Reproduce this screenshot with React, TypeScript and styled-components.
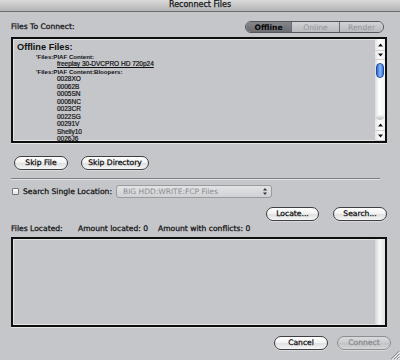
import React from 'react';
import styled, { createGlobalStyle } from 'styled-components';

const GlobalStyle = createGlobalStyle`
  html, body {
    margin: 0;
    padding: 0;
    background: #c5c6ca;
  }
  body {
    font-family: "DejaVu Sans", "Liberation Sans", Arial, sans-serif;
    color: #111;
  }
`;

const Window = styled.div`
  position: relative;
  width: 400px;
  height: 360px;
  overflow: hidden;
  background: #c5c6ca;
  display: flex;
  flex-direction: column;
`;

const TitleBar = styled.div`
  height: 11px;
  border-bottom: 1px solid #6c6d70;
  background: linear-gradient(#dadada, #b3b3b5);
  font-size: 8px;
  line-height: 10px;
  text-align: center;
  color: #151515;
  -webkit-text-stroke: 0.25px #151515;
`;

const Body = styled.div`
  display: flex;
  flex-direction: column;
  padding: 0 13px 0 11px;
`;

const HeaderRow = styled.div`
  margin-top: 9px;
  height: 12px;
  display: flex;
  align-items: center;
  justify-content: space-between;
`;

const Label = styled.span`
  font-size: 7.6px;
  line-height: 10px;
  white-space: nowrap;
  color: #121212;
  -webkit-text-stroke: 0.25px #121212;
`;

const Segmented = styled.div`
  display: flex;
  height: 12px;
  margin-right: 3px;
  border: 1px solid #55565a;
  border-radius: 6px;
  overflow: hidden;
  box-sizing: border-box;
`;

const Segment = styled.div<{ $active?: boolean; $w: number }>`
  width: ${({ $w }) => $w}px;
  display: flex;
  align-items: center;
  justify-content: center;
  font-size: 7.6px;
  color: ${({ $active }) => ($active ? '#050505' : '#939498')};
  font-weight: ${({ $active }) => ($active ? 700 : 400)};
  background: ${({ $active }) =>
    $active
      ? 'linear-gradient(#85878c, #6a6c71)'
      : 'linear-gradient(#d2d3d6, #b9babd)'};
  & + & {
    border-left: 1px solid #6b6c70;
  }
`;

const ListBox = styled.div<{ $h: number }>`
  height: ${({ $h }) => $h}px;
  box-sizing: border-box;
  border: 2px solid #0e0e0e;
  box-shadow: inset 0 0 0 1px #e2e3e5, 0 1px 0 #e4e5e7;
  background: #c5c6ca;
  display: flex;
  overflow: hidden;
`;

const ListContent = styled.div`
  flex: 1;
  padding: 3px 0 0 4px;
  overflow: hidden;
`;

const ListHeading = styled.div`
  font-family: "Liberation Sans", Arial, sans-serif;
  font-weight: 700;
  font-size: 9.2px;
  line-height: 11px;
`;

const PathLine = styled.div`
  font-family: "Liberation Sans", Arial, sans-serif;
  font-weight: 700;
  font-size: 6.1px;
  line-height: 7.45px;
  padding-left: 19px;
  white-space: nowrap;
`;

const FileLine = styled.div<{ $link?: boolean }>`
  font-family: "Liberation Sans", Arial, sans-serif;
  font-size: 6.5px;
  line-height: 7.45px;
  padding-left: 40px;
  white-space: nowrap;
  -webkit-text-stroke: 0.2px #111;
  text-decoration: ${({ $link }) => ($link ? 'underline' : 'none')};
`;

const Scrollbar = styled.div`
  width: 10px;
  display: flex;
  flex-direction: column;
  background: linear-gradient(to right, #d6d7d9, #fbfbfb 45%, #eeeeef);
`;

const ArrowCell = styled.div<{ $h: number }>`
  height: ${({ $h }) => $h}px;
  display: flex;
  align-items: center;
  justify-content: center;
  background: linear-gradient(to right, #e4e4e6, #ffffff 50%, #ececed);
  border-bottom: 1px solid #cfd0d2;
`;

const Track = styled.div`
  flex: 1;
  position: relative;
  padding-top: 3px;
  background: linear-gradient(to right, #dadbdd, #ffffff 40%, #f2f2f3);
  &::after {
    content: '';
    position: absolute;
    left: 0;
    right: 0;
    bottom: 0;
    height: 5px;
    border-radius: 0 0 5px 5px;
    background: linear-gradient(#f4f4f4, #b9babd);
  }
`;

const Thumb = styled.div`
  height: 15px;
  margin: 0 1px;
  box-sizing: border-box;
  border: 1px solid #1e4ea6;
  border-radius: 4px;
  background: linear-gradient(to right, #2d63c6, #8ab9f7 50%, #3c76d8);
`;

const EmptyTrack = styled.div`
  width: 10px;
  background: linear-gradient(to right, #d4d5d8, #f6f6f6 45%, #e1e2e4);
`;

const ButtonRow = styled.div<{ $end?: boolean; $gap: number; $top: number }>`
  display: flex;
  justify-content: ${({ $end }) => ($end ? 'flex-end' : 'flex-start')};
  gap: ${({ $gap }) => $gap}px;
  margin-top: ${({ $top }) => $top}px;
`;

const PushButton = styled.button<{ $w: number; $disabled?: boolean }>`
  width: ${({ $w }) => $w}px;
  height: 14px;
  padding: 0;
  box-sizing: border-box;
  border: 1px solid ${({ $disabled }) => ($disabled ? '#8d8e91' : '#3f4043')};
  border-radius: 7px;
  font-family: "DejaVu Sans", "Liberation Sans", Arial, sans-serif;
  font-size: 7.6px;
  line-height: 12px;
  color: ${({ $disabled }) => ($disabled ? '#8a8b8f' : '#0d0d0d')};
  -webkit-text-stroke: 0.25px ${({ $disabled }) => ($disabled ? '#8a8b8f' : '#0d0d0d')};
  background: ${({ $disabled }) =>
    $disabled
      ? 'linear-gradient(#d9dadc, #cacbce 50%, #c2c3c6 51%, #d4d5d7)'
      : 'linear-gradient(#ffffff, #f3f3f3 45%, #e0e0e1 55%, #f6f6f6)'};
  box-shadow: 0 1px 0 rgba(255, 255, 255, 0.35);
`;

const Separator = styled.div`
  margin-top: 8px;
  width: 369px;
  height: 1px;
  background: #7d7e82;
  border-bottom: 1px solid #e3e4e6;
`;

const SearchRow = styled.div`
  margin-top: 5px;
  height: 13px;
  display: flex;
  align-items: center;
`;

const Checkbox = styled.span`
  width: 7px;
  height: 7px;
  margin-left: 1px;
  margin-right: 4px;
  box-sizing: border-box;
  border: 1px solid #76777b;
  border-radius: 1px;
  background: linear-gradient(#ffffff, #e2e2e3);
`;

const Popup = styled.div`
  margin-left: auto;
  margin-right: 115px;
  width: 156px;
  height: 13px;
  box-sizing: border-box;
  border: 1px solid #9a9b9e;
  border-radius: 3px;
  background: linear-gradient(#e2e3e5, #d0d1d4);
  display: flex;
  align-items: center;
  padding: 0 4px 0 6px;
  font-size: 7.5px;
  color: #8b8c90;
  white-space: nowrap;
`;

const PopupText = styled.span`
  flex: 1;
`;

const StatusRow = styled.div`
  margin-top: 3px;
  display: grid;
  grid-template-columns: 67px 80px auto;
`;

const Footer = styled.div`
  margin-top: 9px;
  margin-right: -4px;
  display: flex;
  justify-content: flex-end;
  gap: 9px;
`;

const Grip = styled.svg`
  position: absolute;
  right: 0;
  bottom: 0;
`;

const Triangle = ({ up }: { up?: boolean }) => (
  <svg width="5" height="4" viewBox="0 0 5 4">
    <path d={up ? 'M2.5 0.5 L5 3.5 L0 3.5 Z' : 'M0 0.5 L5 0.5 L2.5 3.5 Z'} fill="#111" />
  </svg>
);

const bloopers = ['0028XO', '00062B', '0005SN', '0006NC', '0023CR', '0022SG', '00291V', 'Shelly10', '0026J6'];

export default function App() {
  return (
    <Window>
      <GlobalStyle />
      <TitleBar>Reconnect Files</TitleBar>

      <Body>
        {/* Files to connect */}
        <HeaderRow>
          <Label>Files To Connect:</Label>
          <Segmented>
            <Segment $active $w={45}>Offline</Segment>
            <Segment $w={47}>Online</Segment>
            <Segment $w={43}>Render</Segment>
          </Segmented>
        </HeaderRow>

        <ListBox $h={106} style={{ marginTop: 4 }}>
          <ListContent>
            <ListHeading>Offline Files:</ListHeading>
            <PathLine>'Files:PIAF Content:</PathLine>
            <FileLine $link>freeplay 30-DVCPRO HD 720p24</FileLine>
            <PathLine>'Files:PIAF Content:Bloopers:</PathLine>
            {bloopers.map((name) => (
              <FileLine key={name}>{name}</FileLine>
            ))}
          </ListContent>
          <Scrollbar>
            <ArrowCell $h={11}><Triangle up /></ArrowCell>
            <ArrowCell $h={8}><Triangle /></ArrowCell>
            <Track>
              <Thumb />
            </Track>
            <ArrowCell $h={10}><Triangle up /></ArrowCell>
            <ArrowCell $h={9}><Triangle /></ArrowCell>
          </Scrollbar>
        </ListBox>

        <ButtonRow $gap={13} $top={13} style={{ paddingLeft: 3 }}>
          <PushButton $w={54}>Skip File</PushButton>
          <PushButton $w={68}>Skip Directory</PushButton>
        </ButtonRow>

        <Separator />

        {/* Search */}
        <SearchRow>
          <Checkbox />
          <Label>Search Single Location:</Label>
          <Popup>
            <PopupText>BIG HDD:WRITE:FCP Files</PopupText>
            <svg width="4" height="7" viewBox="0 0 4 7">
              <path d="M2 0 L4 2.5 L0 2.5 Z M0 4.5 L4 4.5 L2 7 Z" fill="#333" />
            </svg>
          </Popup>
        </SearchRow>

        <ButtonRow $end $gap={14} $top={9}>
          <PushButton $w={53}>Locate...</PushButton>
          <PushButton $w={54}>Search...</PushButton>
        </ButtonRow>

        <StatusRow>
          <Label>Files Located:</Label>
          <Label>Amount located: 0</Label>
          <Label>Amount with conflicts: 0</Label>
        </StatusRow>

        <ListBox $h={90} style={{ marginTop: 3 }}>
          <ListContent />
          <EmptyTrack />
        </ListBox>

        <Footer>
          <PushButton $w={54}>Cancel</PushButton>
          <PushButton $w={54} $disabled>Connect</PushButton>
        </Footer>
      </Body>

      <Grip width="11" height="11" viewBox="0 0 11 11">
        <path d="M10 2 L2 10 M10 5 L5 10 M10 8 L8 10" stroke="#8e8f92" strokeWidth="1" />
        <path d="M11 3 L3 11 M11 6 L6 11 M11 9 L9 11" stroke="#eeeeef" strokeWidth="1" />
      </Grip>
    </Window>
  );
}
